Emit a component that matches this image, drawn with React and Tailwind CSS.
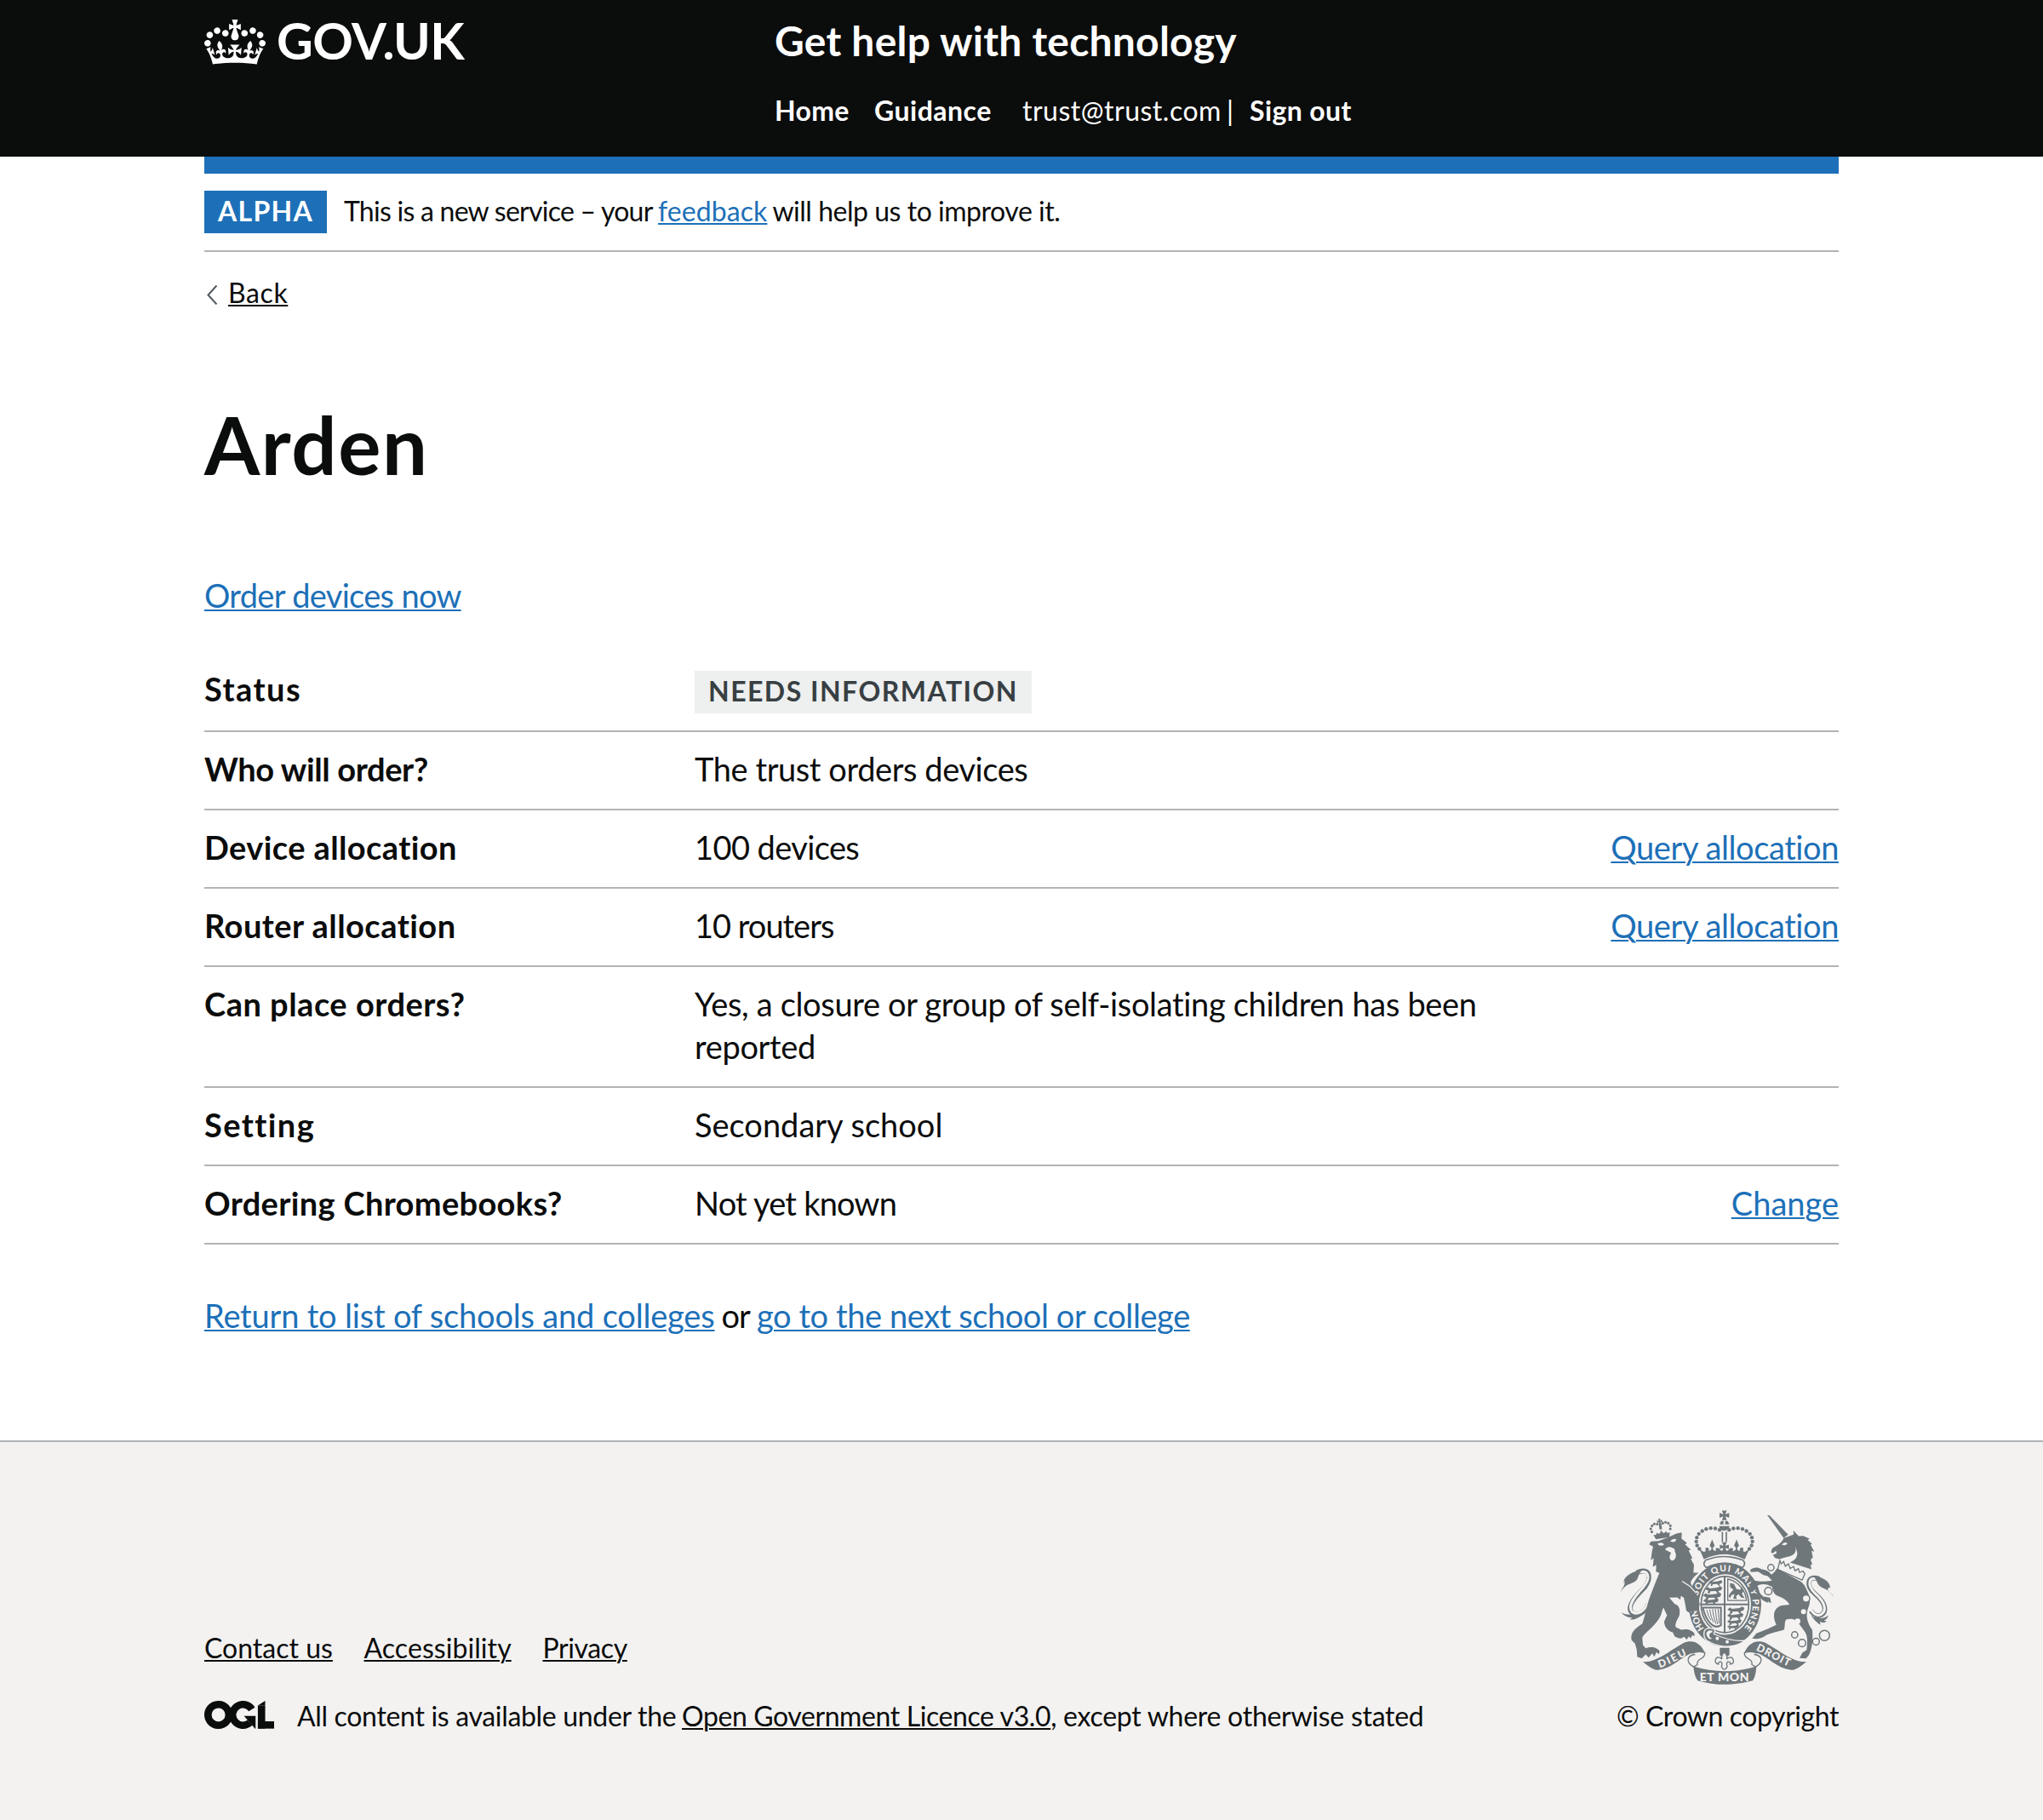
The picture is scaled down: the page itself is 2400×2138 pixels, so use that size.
const CROWN =
  'M25 30.2c3.5 1.5 7.7-.2 9.1-3.7 1.5-3.6-.2-7.8-3.9-9.2-3.6-1.4-7.6.3-9.1 3.9-1.4 3.5.3 7.5 3.9 9zM9 39.5c3.6 1.5 7.8-.2 9.2-3.7 1.5-3.6-.2-7.8-3.9-9.1-3.6-1.5-7.6.2-9.1 3.8-1.4 3.5.3 7.5 3.8 9zM4.4 57.2c3.5 1.5 7.7-.2 9.1-3.8 1.5-3.6-.2-7.7-3.9-9.1-3.5-1.5-7.6.3-9.1 3.8-1.4 3.5.3 7.6 3.9 9.1zm38.3-21.4c3.5 1.5 7.7-.2 9.1-3.8 1.5-3.6-.2-7.7-3.9-9.1-3.6-1.5-7.6.3-9.1 3.8-1.3 3.6.4 7.7 3.9 9.1zm64.4-5.6c-3.6 1.5-7.8-.2-9.1-3.7-1.5-3.6.2-7.8 3.8-9.2 3.6-1.4 7.7.3 9.2 3.9 1.3 3.5-.4 7.5-3.9 9zm15.9 9.3c-3.6 1.5-7.7-.2-9.1-3.7-1.5-3.6.2-7.8 3.7-9.1 3.6-1.5 7.7.2 9.2 3.8 1.5 3.5-.3 7.5-3.8 9zm4.7 17.7c-3.6 1.5-7.8-.2-9.2-3.8-1.5-3.6.2-7.7 3.9-9.1 3.6-1.5 7.7.3 9.2 3.8 1.3 3.5-.4 7.6-3.9 9.1zM89.3 35.8c-3.6 1.5-7.8-.2-9.2-3.8-1.4-3.6.2-7.7 3.9-9.1 3.6-1.5 7.7.3 9.2 3.8 1.4 3.6-.3 7.7-3.9 9.1zM69.7 17.7l8.9 4.7V9.3l-8.9 2.8c-.2-.3-.5-.6-.9-.9L72.4 0H59.6l3.5 11.2c-.3.3-.6.5-.9.9l-8.8-2.8v13.1l8.8-4.7c.3.3.6.7.9.9l-5 15.4v.1c-.2.8-.4 1.6-.4 2.4 0 4.1 3.1 7.5 7 8.1h.2c.3 0 .7.1 1 .1.4 0 .7 0 1-.1h.2c4-.6 7.1-4.1 7.1-8.1 0-.8-.1-1.7-.4-2.4V34l-5.1-15.4c.4-.2.7-.6 1-.9zM66 92.8c16.9 0 32.8 1.1 47.1 3.2 4-16.9 8.9-26.7 14-33.5l-9.6-3.4c1 4.9 1.1 7.2 0 10.2-1.5-1.4-3-4.3-4.2-8.7L108.6 76c2.8-2 5-3.2 7.5-3.3-4.4 9.4-10 11.9-13.6 11.2-4.3-.8-6.3-4.6-5.6-7.9 1-4.7 5.7-5.9 8-.5 4.3-8.7-3-11.4-7.6-8.8 7.1-7.2 7.9-13.5 2.1-21.1-8 6.1-8.1 12.3-4.5 20.8-4.7-5.4-12.1-2.5-9.5 6.2 3.4-5.2 7.9-2 7.2 3.1-.6 4.3-6.4 7.8-13.5 7.2-10.3-.9-10.9-8-11.2-13.8 2.5-.5 7.1 1.8 11 7.3L80.2 60c-4.1 4.4-8 5.3-12.3 5.4 1.4-4.4 8-11.6 8-11.6H55.5s6.4 7.2 7.9 11.6c-4.2-.1-8-1-12.3-5.4l1.4 16.4c3.9-5.5 8.5-7.7 10.9-7.3-.3 5.8-.9 12.8-11.1 13.8-7.2.6-12.9-2.9-13.5-7.2-.7-5 3.8-8.3 7.1-3.1 2.7-8.7-4.6-11.6-9.4-6.2 3.7-8.5 3.6-14.7-4.6-20.8-5.8 7.6-5 13.9 2.2 21.1-4.7-2.6-11.9.1-7.7 8.8 2.3-5.5 7.1-4.2 8.1.5.7 3.3-1.3 7.1-5.7 7.9-3.5.7-9-1.8-13.5-11.2 2.5.1 4.7 1.3 7.5 3.3l-4.7-15.4c-1.2 4.4-2.7 7.2-4.3 8.7-1.1-3-.9-5.3 0-10.2l-9.5 3.4c5 6.9 9.9 16.7 14 33.5 14.8-2.1 30.8-3.2 47.7-3.2z';

const GREY = '#6f777b';
const PAPER = '#f3f2f1';

// Pearls on the left arch of the crown; the right arch mirrors them about x = 437.
const PEARLS = [
  [420, 139], [405, 134], [389, 133], [373, 136], [359, 143], [347, 153], [340, 166], [338, 180], [341, 194], [349, 206],
];
const LINKS = [
  [601, 272, 11], [592, 355, 13], [725, 381, 13], [685, 509, 11], [711, 538, 13], [760, 533, 12], [790, 511, 18],
];

function Cross({ x, y, r }) {
  return (
    <path
      transform={`translate(${x} ${y}) scale(${r / 10})`}
      d="M-5-10H5L2-2 10-5V5L2 2 5 10H-5L-2 2-10 5V-5L-2-2z"
      fill={GREY}
    />
  );
}

function Beast({ x, y, s = 1 }) {
  return (
    <path
      transform={`translate(${x} ${y}) scale(${s})`}
      d="M0 6l7-6 5 4 20-2 8-4 6 4-3 7-8 2 3 7-5-1-5-6-14 1-3 6-5-1 2-7-5-2z"
      fill={GREY}
    />
  );
}

function RoyalArms() {
  return (
    <svg className="h-[205px] w-[250px]" viewBox="72 70 750 614" role="img" aria-label="Royal coat of arms">
      <defs>
        <path id="garterTop" d="M344 372 A98 116 0 1 1 499 493" />
        <path id="garterLeft" d="M366 487 A98 116 0 0 1 341 416" />
        <path id="ribbonLeft" d="M209 626 C250 612 282 590 322 574" />
        <path id="ribbonRight" d="M547 562 C590 582 625 605 672 624" />
      </defs>

      {/* crown */}
      <Cross x={437} y={88} r={17} />
      <path d="M426 108h8v12h-13c1-6 3-9 5-12zM440 108h8c3 3 5 7 6 12h-14zM419 126h36c0 18-36 24-36 0z" fill={GREY} />
      <path d="M430 146v36M444 146v36" stroke={GREY} strokeWidth="5" />
      {PEARLS.map(([x, y]) => (
        <g key={x} fill={GREY}>
          <circle cx={x} cy={y} r="6.6" />
          <circle cx={874 - x} cy={y} r="6.6" />
        </g>
      ))}
      <Cross x={437} y={199} r={16} />
      {[false, true].map((flip) => (
        <path
          key={String(flip)}
          transform={flip ? 'matrix(-1 0 0 1 874 0)' : undefined}
          d="M350 209L359 213Q363 219 371 214L370 203Q385 198 382 213Q394 212 391 201Q383 196 387 190L394 173 401 190Q405 196 397 201Q394 212 408 214Q402 199 417 204L424 211Q430 214 438 212V225Q398 226 365 243z"
          fill={GREY}
        />
      ))}
      <path d="M371 246q66-26 132 0 12 15-3 26-63-30-126 0-16-10-3-26z" fill={PAPER} stroke={GREY} strokeWidth="5" />

      {/* garter with the shield */}
      <ellipse cx="439" cy="402" rx="128" ry="148" fill={GREY} />
      <ellipse cx="439" cy="402" rx="92" ry="107" fill={PAPER} />
      <ellipse cx="439" cy="402" rx="84" ry="99" fill="none" stroke={GREY} strokeWidth="5" />
      <path d="M438 302v200M352 402h172" stroke={GREY} strokeWidth="6" />
      <Beast x={382} y={318} s={1.05} />
      <Beast x={370} y={340} s={1.3} />
      <Beast x={362} y={362} s={1.4} />
      <Beast x={362} y={382} s={1.2} />
      <Beast x={448} y={412} s={1.3} />
      <Beast x={447} y={434} s={1.25} />
      <Beast x={447} y={456} s={1.1} />
      <Beast x={447} y={475} s={0.9} />
      <path d="M449 312v76h66c-2-32-26-66-66-76z" fill="none" stroke={GREY} strokeWidth="4" />
      <path d="M457 326l14 4 9 18 14 2 4-12 7 14-6 13 10 15-13-3-9-11-9 7 3 10-13-2 5-15-11 3-5 12-5-10 8-12 9-9-12-10z" fill={GREY} />
      <path d="M361 413h64v62c-24 17-52-12-64-62z" fill="none" stroke={GREY} strokeWidth="6" />
      <path d="M375 421q5 24 15 36M385 419q5 30 14 46M395 418q5 34 12 52M405 417q4 36 8 54M415 417q3 30 3 52" fill="none" stroke={GREY} strokeWidth="3" />
      <g fill={PAPER} className="font-['Lato',sans-serif] font-black">
        <text fontSize="31"><textPath href="#garterTop" textLength="398">SOIT QUI MAL Y PENSE</textPath></text>
        <text fontSize="31"><textPath href="#garterLeft" textLength="72">HON</textPath></text>
      </g>
      <path d="M366 500c0-14 22-20 38-8l-4 14c50 22 90 26 112 22-30 24-78 30-124 8-16-4-26-20-22-36z" fill={GREY} stroke={PAPER} strokeWidth="4" />
      <path d="M398 494c-18-8-30 4-25 18 4 14 18 18 24 8-12 0-16-16-2-18z" fill={PAPER} stroke={GREY} strokeWidth="4" />
      <circle cx="412" cy="522" r="6" fill={PAPER} />
      <circle cx="447" cy="534" r="6" fill={PAPER} />

      {/* lion */}
      <path d="M128 290C172 270 184 302 156 342C124 374 92 408 110 430C128 448 156 432 170 400" fill="none" stroke={GREY} strokeWidth="17" />
      <path d="M120 294C172 272 180 306 152 340C120 374 94 408 112 428C130 442 154 428 170 392" fill="none" stroke={PAPER} strokeWidth="9" />
      <path d="M72 360c4-20 18-22 12-44-2 6-2 10-4 12 2-26 32-44 72-48-20 8-14 24-26 38-14 14-38 8-54 42z" fill={GREY} />
      <path d="M74 430q20 12 40 6 20 8 36-6-10 24-46 26 6-6 8-8-24 0-38-18z" fill={GREY} />
      <path
        d="M172 190L178 180 205 178 240 165 268 152 287 148 286 170 305 185 299 191 319 209 311 212 325 240 318 240 330 262 328 290 346 290C340 298 325 305 318 325L335 362 350 398C350 412 345 420 340 426L330 424 328 434 318 426 312 430 303 424 299 400 294 378 284 372 282 385 271 377 243 378 262 400C278 405 283 420 278 442C268 460 262 472 266 482L285 491C305 486 325 492 332 505L331 514 324 510 318 522 312 514 304 526 296 516 284 522C275 520 268 518 262 514L255 500C235 496 225 478 225 462L235 440 222 412 213 440C195 480 150 505 148 520L150 545 160 556C180 548 205 555 209 568L206 577 198 570 190 586 183 574 170 589 160 578 146 592 130 586 128 560 122 540 110 528C104 500 125 484 148 470C158 440 165 400 175 375L190 335 208 291 196 286 197 262 185 270 188 238 178 246 182 215 186 198z"
        fill={GREY}
      />
      <path d="M201 188q16-8 24 2-14 10-24-2zM246 178q14-10 22-6-6 16-22 6zM228 208q8-14 26-6 12 6 8 12 8 12 2 26-12 16-20-2 0-12 6-18z" fill={PAPER} />
      <path d="M288 320l28 18 18 20" fill="none" stroke={PAPER} strokeWidth="4" />
      <g transform="rotate(-9 213 135)">
        <path d="M184 152l7 2q6-2 6-8 4 8 11 4l5-10 5 10q8 4 12-4 0 6 6 8l7-2-5 17h-48z" fill={GREY} />
        <Cross x={213} y={109} r={9} />
        <path d="M213 117v20" stroke={GREY} strokeWidth="9" />
        {[[180, 141], [178, 130], [184, 120], [193, 115], [203, 117], [223, 117], [233, 115], [242, 120], [248, 130], [246, 141]].map(([x, y]) => (
          <circle key={x} cx={x} cy={y} r="4.6" fill={GREY} />
        ))}
      </g>

      {/* unicorn */}
      <path d="M588 87l8 1 66 68-16 12z" fill={GREY} />
      <path d="M646 168c-4 14-18 24-40 36l-5 14 6 4 12-9 2 9-13 6 8 10 14 4 30-8c22-4 32-14 28-36l6 22c0 18-10 26-26 34l76 24-3-16 6-2-6-16 8-8-5-23 10 3-13-24 5-4-15-13 6-5-22-10-16 1-19-20 2 14-22 8z" fill={GREY} />
      <path d="M639 191q12-12 20-4-6 10-20 4z" fill={PAPER} />
      <path d="M633 247l4 12 9-8 6 16 11-8 6 16 12-7 5 15 12-7 4 13 12-5 7 10-10 22-86-38z" fill={PAPER} stroke={GREY} strokeWidth="4" />
      <path
        d="M622 275L700 318C715 325 722 338 728 352C740 375 742 395 732 415C724 440 728 455 738 478L747 492C750 530 746 560 735 580L725 592 702 591 712 572 727 562C732 530 728 510 722 500L700 470C685 450 670 452 655 455C648 462 652 475 648 490C620 500 600 502 585 510C565 525 550 524 535 522L550 504 590 488 620 474C605 440 612 418 632 408C645 403 660 405 667 402C655 385 640 378 625 372C612 366 606 352 606 340L590 333C575 328 560 330 547 340L565 365 574 374 598 378 602 398 590 390 593 396C575 392 562 380 552 362L535 330 528 320 545 318C560 322 580 322 605 318L590 302 575 298 556 286 530 288 528 280C540 270 555 270 568 278C585 280 595 285 603 297C612 290 618 282 622 275z"
        fill={GREY}
      />
      <path d="M772 312C728 296 724 336 756 364C796 398 800 428 776 440C764 446 752 438 742 424" fill="none" stroke={GREY} strokeWidth="17" />
      <path d="M772 314C730 298 728 336 758 364C796 398 798 426 776 438C762 444 752 436 738 414" fill="none" stroke={PAPER} strokeWidth="9" />
      <path d="M822 376c-8-22-26-14-18-34l6 2c0-24-28-40-68-44 22 8 18 22 28 34 14 14 34 10 52 42z" fill={GREY} />
      <path d="M742 440q10 10 24 8 20 8 38-8-6 16-16 18l10 4q-14 8-24 0l2 12q-18-10-34-34z" fill={GREY} />
      {LINKS.map(([x, y, r]) => (
        <circle key={x} cx={x} cy={y} r={r} fill={PAPER} stroke={GREY} strokeWidth="4.5" />
      ))}
      <circle cx="716" cy="427" r="9" fill={PAPER} />
      <circle cx="695" cy="461" r="10" fill={PAPER} />

      {/* motto ribbon */}
      <path d="M421 555h34v24q-5 8-10 2-8-14-15 0-6 6-9-2z" fill={GREY} />
      <path d="M437 570q-14 14-8 24-20-14-24 6 0 12 12 12-2-10 8-8l4 6-2 12q10 18 20 0l-2-12 4-6q10-2 8 8 14 0 12-12-4-20-24-6 6-10-8-24z" fill={PAPER} stroke={GREY} strokeWidth="4" />
      <path d="M328 620q110 34 222 0c-2 22-4 38-13 50q-99 28-194 0c-9-12-13-28-15-50z" fill={GREY} />
      {[false, true].map((flip) => (
        <g key={String(flip)} transform={flip ? 'matrix(-1 0 0 1 876 0)' : undefined}>
          <path d="M150 604c50 2 94-40 142-66 34-14 62 0 76 34l-14 12q-14-18-34-10c-34 12-66 52-116 59-18 0-32-12-54-29z" fill={GREY} />
          <path d="M322 574q24-10 46-2 2 14-18 24-10 6-8 18l-14 8q-22-14-18-30 6-12 24-14" fill={PAPER} stroke={GREY} strokeWidth="4" />
        </g>
      ))}
      <g fill={PAPER} className="font-['Lato',sans-serif] font-black" fontSize="37">
        <text><textPath href="#ribbonLeft" textLength="106">DIEU</textPath></text>
        <text><textPath href="#ribbonRight" textLength="130">DROIT</textPath></text>
        <text x="437" y="673" fontSize="42" textAnchor="middle" textLength="174">ET MON</text>
      </g>
    </svg>
  );
}

function OglMark() {
  return (
    <svg className="mt-[6px] h-[33px] w-[82px]" viewBox="0 0 483.2 195.7" preserveAspectRatio="none" fill="#0b0c0c" role="img" aria-label="Open Government Licence">
      <circle cx="97.8" cy="97.8" r="72.5" fill="none" stroke="#0b0c0c" strokeWidth="50.7" />
      <path d="M329.2 58.9A72.5 72.5 0 1 0 316 152" fill="none" stroke="#0b0c0c" strokeWidth="50.7" />
      <path d="M274.9 105.7h80v87.8h-3l-53-60z" />
      <rect x="370.8" y="32.4" width="50.7" height="161.1" />
      <rect x="370.8" y="142.8" width="112.4" height="50.7" />
      <path d="M370.8 33L421.5 0v33z" />
    </svg>
  );
}

const link = 'text-[#1d70b8] underline decoration-2 underline-offset-2';
const darkLink = 'underline decoration-2 underline-offset-2';

const rows = [
  { key: 'Who will order?', k: 'tracking-[-0.38px]', value: 'The trust orders devices', v: 'tracking-[-0.42px]' },
  { key: 'Device allocation', k: 'tracking-[0.4px]', value: '100 devices', v: 'tracking-[-0.6px]', action: 'Query allocation', a: 'tracking-[-0.41px]' },
  { key: 'Router allocation', k: 'tracking-[0.46px]', value: '10 routers', v: 'tracking-[-1px]', action: 'Query allocation', a: 'tracking-[-0.41px]' },
  { key: 'Can place orders?', k: 'tracking-[0.5px]', value: 'Yes, a closure or group of self-isolating children has been reported', v: 'tracking-[-0.34px]' },
  { key: 'Setting', k: 'tracking-[1.4px]', value: 'Secondary school', v: 'tracking-[0px]' },
  { key: 'Ordering Chromebooks?', k: 'tracking-[0.33px]', value: 'Not yet known', v: 'tracking-[-0.78px]', action: 'Change', a: 'tracking-[0px]' },
];

export default function App() {
  return (
    <div className="flex min-h-[2138px] w-[2400px] flex-col bg-white font-['Lato',sans-serif] text-[38px] leading-[50px] text-[#0b0c0c]">
      <header className="h-[184px] bg-[#0b0c0c] text-white">
        <div className="mx-auto flex w-[1920px]">
          <a className="flex w-[670px] items-start">
            <svg className="mt-[23px] h-[53px] w-[72px]" viewBox="0 0 132 97" fill="currentColor" aria-hidden="true">
              <path d={CROWN} />
            </svg>
            <span className="mt-3 ml-[13px] text-[59px] leading-[71px] font-bold tracking-[-0.5px]">GOV.UK</span>
          </a>
          <div className="mt-[19px]">
            <div className="text-[48px] leading-[57px] font-bold tracking-[0.22px]">Get help with technology</div>
            <nav className="mt-[30px] flex text-[32px] leading-[47px]">
              <a className="w-[117px] font-bold tracking-[0.3px]">Home</a>
              <a className="w-[174px] font-bold tracking-[0.5px]">Guidance</a>
              <span className="w-[234px] tracking-[0.5px]">trust@trust.com</span>
              <span className="w-5 text-center">|</span>
              <a className="ml-[13px] font-bold tracking-[0.4px]">Sign out</a>
            </nav>
          </div>
        </div>
      </header>

      <div className="mx-auto w-[1920px]">
        <div className="h-5 bg-[#1d70b8]" />
        <div className="flex border-b-2 border-[#b1b4b6] py-5 text-[32px] leading-[47px]">
          <strong className="w-36 bg-[#1d70b8] px-4 pb-[3px] font-bold tracking-[1.3px] text-white">ALPHA</strong>
          <div className="ml-5 flex whitespace-pre">
            <span className="w-[369px] tracking-[-0.75px]">This is a new service – your</span>
            <a className={`${link} tracking-[0.08px]`}>feedback</a>
            <span className="ml-[6px] tracking-[-0.47px]">will help us to improve it.</span>
          </div>
        </div>

        <a className="mt-6 flex text-[32px] leading-[47px]">
          <svg className="mt-[14px] ml-[2px] h-6 w-[14px]" viewBox="0 0 14 24" fill="none" stroke="#505a5f" strokeWidth="2" aria-hidden="true">
            <path d="M12.5 1.5L2.5 12.5L12.5 23.5" />
          </svg>
          <span className={`${darkLink} ml-3 tracking-[0.6px]`}>Back</span>
        </a>

        <h1 className="mt-[105px] text-[94px] leading-[99px] font-bold tracking-[1.6px]">Arden</h1>
        <div className="mt-[105px] leading-[46px]">
          <a className={`${link} tracking-[-0.68px]`}>Order devices now</a>
        </div>

        <dl className="mt-[62px]">
          <div className="flex border-b-2 border-[#b1b4b6] pb-5">
            <dt className="w-[576px] font-bold tracking-[1.45px]">Status</dt>
            <dd className="mt-1">
              <strong className="block w-[396px] bg-[#eeefef] px-4 pb-[3px] text-[32px] leading-[47px] font-bold tracking-[1.47px] whitespace-nowrap text-[#383f43]">
                NEEDS INFORMATION
              </strong>
            </dd>
          </div>
          {rows.map((row) => (
            <div key={row.key} className="flex border-b-2 border-[#b1b4b6] pt-[18px] pb-[22px]">
              <dt className={`w-[576px] font-bold ${row.k}`}>{row.key}</dt>
              <dd className={`w-[960px] ${row.v}`}>{row.value}</dd>
              {row.action && (
                <dd className="flex-1 text-right">
                  <a className={`${link} ${row.a}`}>{row.action}</a>
                </dd>
              )}
            </div>
          ))}
        </dl>

        <p className="mt-[58px] flex">
          <a className={`${link} tracking-[-0.19px]`}>Return to list of schools and colleges</a>
          <span className="w-[49.5px] text-center tracking-[-1px]">or</span>
          <a className={`${link} tracking-[-0.42px]`}>go to the next school or college</a>
        </p>
      </div>

      <footer className="mt-[122px] h-[446px] border-t-2 border-[#b1b4b6] bg-[#f3f2f1] pt-20 text-[32px] leading-[47px]">
        <div className="mx-auto flex w-[1920px] items-end justify-between">
          <div>
            <ul className="flex">
              <li className="w-[187.5px]"><a className={darkLink}>Contact us</a></li>
              <li className="w-[210px]"><a className={`${darkLink} tracking-[0.07px]`}>Accessibility</a></li>
              <li><a className={`${darkLink} tracking-[-0.4px]`}>Privacy</a></li>
            </ul>
            <div className="mt-[33px] flex">
              <OglMark />
              <p className="ml-[27px] whitespace-nowrap">
                <span className="inline-block w-[452px] tracking-[-0.32px]">All content is available under the</span>
                <a className={`${darkLink} tracking-[-0.4px]`}>Open Government Licence v3.0</a>
                <span className="tracking-[-0.27px]">, except where otherwise stated</span>
              </p>
            </div>
          </div>
          <div className="flex flex-col items-end">
            <div className="mr-[6px]"><RoyalArms /></div>
            <a className="mt-[13px] tracking-[-0.44px]">© Crown copyright</a>
          </div>
        </div>
      </footer>
    </div>
  );
}
